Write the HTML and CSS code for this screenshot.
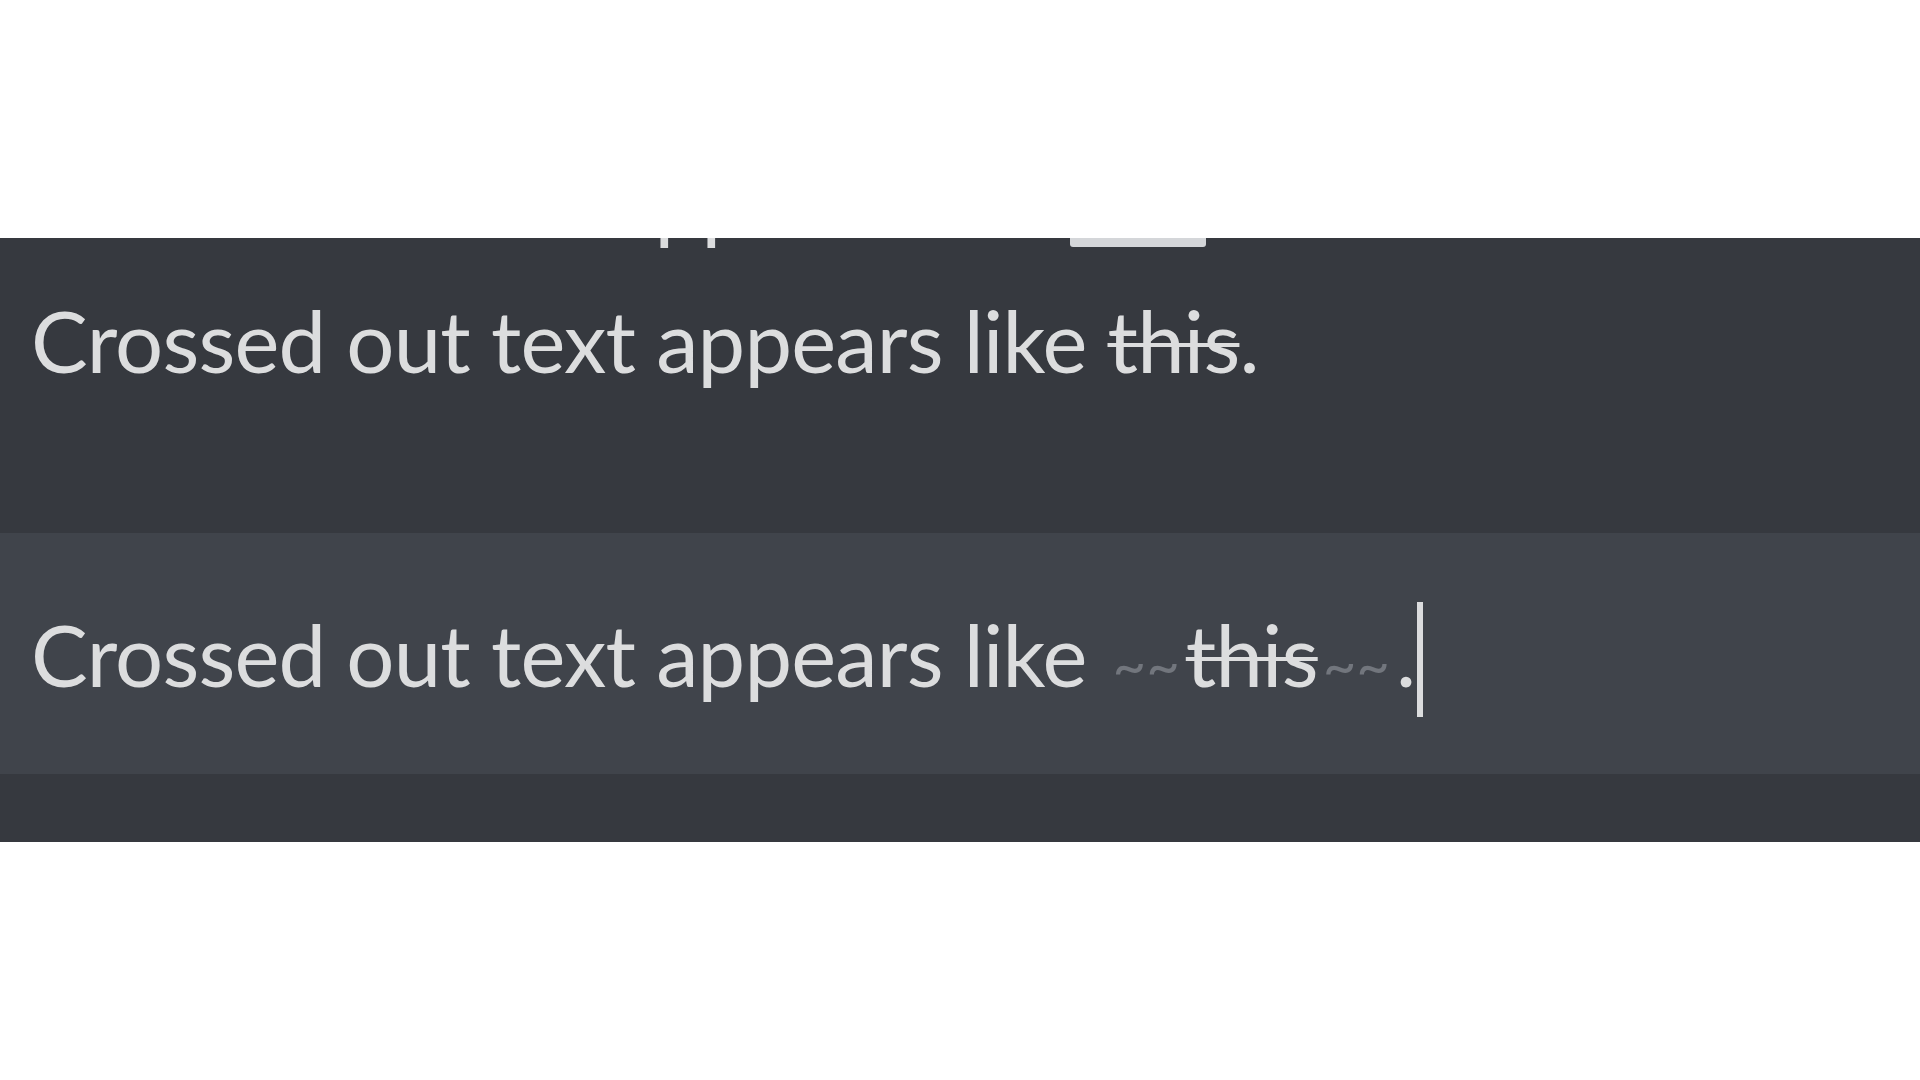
FILE: index.html
```html
<!DOCTYPE html>
<html lang="en">
<head>
  <meta charset="UTF-8" />
  <title>Crossed out text</title>
  <link rel="stylesheet" href="styles.css">
</head>
<body>

  <div class="top-space"></div>

  <div class="chat">
    <div class="message prev">Crossed out text appears like <span class="code">this</span>.</div>
    <div class="message">Crossed out text appears like <s class="strike">this</s>.</div>

    <div class="input-bar">
      <div class="message">Crossed out text appears like <span class="tilde">~~</span><s class="strike">this</s><span class="tilde">~~</span>.<span class="cursor"></span></div>
    </div>
  </div>

</body>
</html>
```
FILE: styles.css
```css
body {
  margin: 0;
  background: #ffffff;
  font-family: Lato, "Open Sans", sans-serif;
}
.top-space {
  height: 238px;
}
.chat {
  background: #36393f;
  height: 604px;
  overflow: hidden;
}
.message {
  color: #dcddde;
  font-size: 85px;
  line-height: 100px;
  letter-spacing: -0.8px;
  padding-left: 31px;
  white-space: nowrap;
  margin-top: 40px;
}
.prev {
  margin-top: -88px;
  text-indent: -43px;
}
.code {
  background: #d4d6d9;
  color: #d4d6d9;
  border-radius: 3px;
  padding: 0 2px 0 3px;
  margin-left: 5px;
  line-height: 60px;
  vertical-align: 4px;
}
.strike {
  text-decoration: line-through;
  text-decoration-thickness: 4px;
  text-decoration-color: #dcddde;
}
.input-bar {
  background: #40444b;
  margin-top: 143px;
  padding: 69px 0 57px;
}
.input-bar .message {
  margin-top: 0;
}
.tilde {
  color: #72767d;
  font-size: 58px;
  letter-spacing: 0;
  margin: 0 6px 0 5px;
}
.cursor {
  display: inline-block;
  width: 6px;
  height: 115px;
  background: #dcddde;
  margin-left: 2px;
  vertical-align: -30px;
}
```
